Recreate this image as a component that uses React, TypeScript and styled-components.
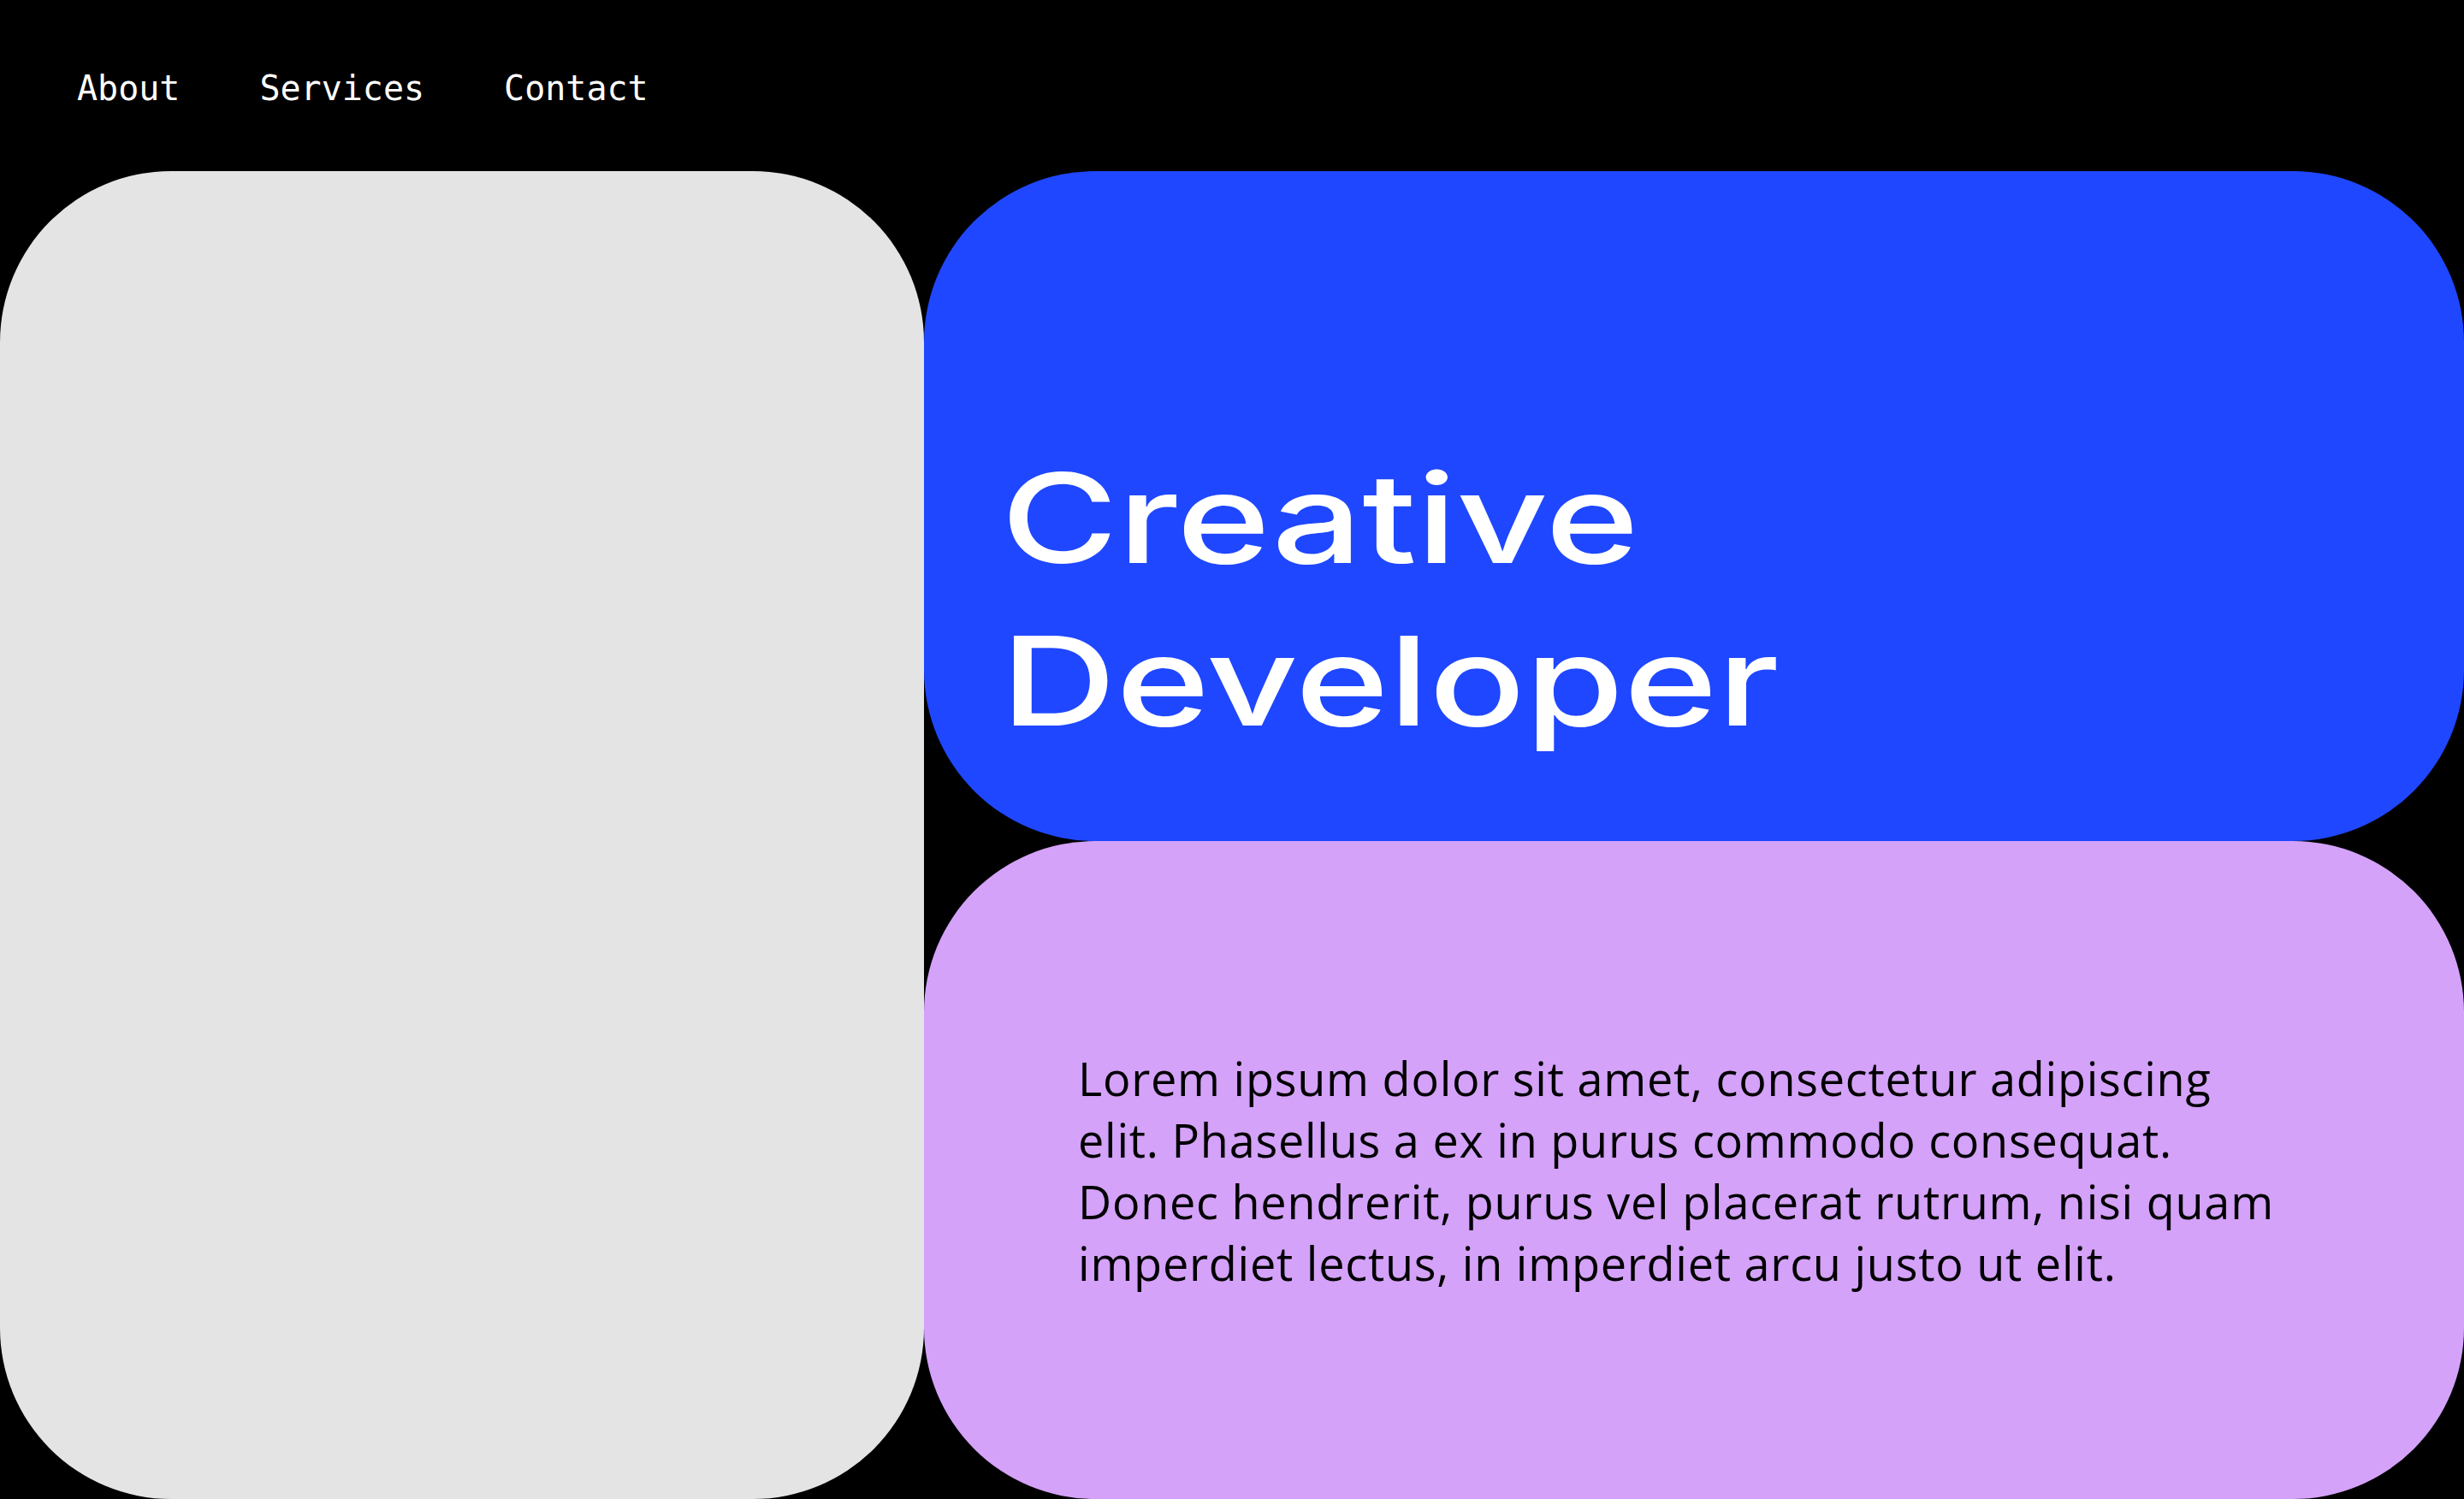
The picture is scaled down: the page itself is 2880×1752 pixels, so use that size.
import React from "react";
import styled, { createGlobalStyle } from "styled-components";

const GlobalStyle = createGlobalStyle`
  html, body {
    margin: 0;
    padding: 0;
    background: #000;
  }
  body {
    font-family: "Open Sans", "Liberation Sans", sans-serif;
  }
  #root {
    width: 2880px;
    height: 1752px;
  }
`;

const Page = styled.div`
  width: 2880px;
  height: 1752px;
  display: flex;
  flex-direction: column;
  background: #000;
  overflow: hidden;
`;

const Nav = styled.nav`
  height: 200px;
  flex: 0 0 200px;
  box-sizing: border-box;
  padding: 80px 0 0 90px;
  display: flex;
  align-items: flex-start;
  gap: 93px;
`;

const NavLink = styled.a`
  font-family: "DejaVu Sans Mono", "Liberation Mono", monospace;
  font-size: 40px;
  line-height: normal;
  color: #fff;
  text-decoration: none;
`;

const Grid = styled.main`
  flex: 1;
  display: grid;
  grid-template-columns: 1080px 1fr;
  grid-template-rows: 783px 1fr;
`;

const Card = styled.section<{ $bg: string }>`
  background: ${(p) => p.$bg};
  border-radius: 200px;
  box-sizing: border-box;
  min-width: 0;
`;

const PortraitCard = styled(Card)`
  grid-row: 1 / span 2;
  grid-column: 1;
`;

const HeroCard = styled(Card)`
  grid-row: 1;
  grid-column: 2;
  display: flex;
  flex-direction: column;
  justify-content: flex-end;
  padding: 0 0 92px 90px;
`;

const Heading = styled.h1`
  margin: 0;
  font-family: Inter, "Liberation Sans", sans-serif;
  font-weight: 500;
  font-size: 145px;
  line-height: 190px;
  color: #fff;
`;

const HeadingLine = styled.span`
  display: block;
  transform: scaleX(1.285);
  transform-origin: left center;
  white-space: nowrap;
`;

const AboutCard = styled(Card)`
  grid-row: 2;
  grid-column: 2;
  display: flex;
  align-items: center;
  justify-content: center;
`;

const Paragraph = styled.p`
  margin: 0;
  width: 1440px;
  font-family: "Open Sans", "Liberation Sans", sans-serif;
  font-size: 54px;
  line-height: 72px;
  letter-spacing: 0.75px;
  color: #000;
`;

const lines = [
  "Lorem ipsum dolor sit amet, consectetur adipiscing",
  "elit. Phasellus a ex in purus commodo consequat.",
  "Donec hendrerit, purus vel placerat rutrum, nisi quam",
  "imperdiet lectus, in imperdiet arcu justo ut elit.",
];

export default function App() {
  return (
    <>
      <GlobalStyle />
      <Page>
        <Nav>
          <NavLink href="#about">About</NavLink>
          <NavLink href="#services">Services</NavLink>
          <NavLink href="#contact">Contact</NavLink>
        </Nav>
        <Grid>
          <PortraitCard $bg="#e4e4e4" />
          <HeroCard $bg="#1f47ff">
            <Heading>
              <HeadingLine>Creative</HeadingLine>
              <HeadingLine>Developer</HeadingLine>
            </Heading>
          </HeroCard>
          <AboutCard $bg="#d4a2f9">
            <Paragraph>
              {lines.map((l, i) => (
                <React.Fragment key={i}>
                  {l}
                  {i < lines.length - 1 && <br />}
                </React.Fragment>
              ))}
            </Paragraph>
          </AboutCard>
        </Grid>
      </Page>
    </>
  );
}
